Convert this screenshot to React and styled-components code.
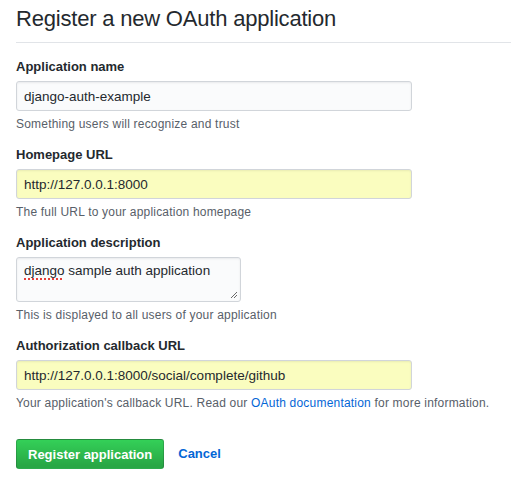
import React from 'react'
import styled, { createGlobalStyle } from 'styled-components'

const GlobalStyle = createGlobalStyle`
  body {
    margin: 0;
    background: #fff;
    color: #24292e;
    font-family: "Liberation Sans", Helvetica, Arial, sans-serif;
    font-size: 14px;
    line-height: 20px;
  }
`

const Page = styled.div`
  padding: 0 0 0 16px;
`

const Header = styled.div`
  padding-top: 4px;
  padding-bottom: 8px;
  border-bottom: 1px solid #e1e4e8;
  margin-bottom: 14px;
`

const Title = styled.h2`
  margin: 0;
  font-size: 22px;
  font-weight: 400;
  line-height: 30px;
  letter-spacing: -0.2px;
  color: #24292e;
`

const Form = styled.form`
  display: flex;
  flex-direction: column;
  gap: 12px;
`

const Group = styled.div`
  display: flex;
  flex-direction: column;
  align-items: flex-start;
`

const Label = styled.label`
  font-weight: 700;
  font-size: 13px;
  line-height: 20px;
  margin-bottom: 4px;
`

const Field = styled.input`
  box-sizing: border-box;
  width: 396px;
  height: 30px;
  padding: 0 7px;
  font-family: inherit;
  font-size: 13.5px;
  color: #24292e;
  background: ${(p) => (p.$autofill ? '#fafdbf' : '#fafbfc')};
  border: 1px solid #d1d5da;
  border-radius: 3px;
  box-shadow: inset 0 1px 2px rgba(27, 31, 35, 0.075);
  outline: none;
`

const TextBox = styled.div`
  position: relative;
  box-sizing: border-box;
  width: 225px;
  height: 45px;
  padding: 3px 7px;
  font-size: 13.5px;
  line-height: 20px;
  background: #fafbfc;
  border: 1px solid #d1d5da;
  border-radius: 3px;
  box-shadow: inset 0 1px 2px rgba(27, 31, 35, 0.075);
`

const Misspelled = styled.span`
  text-decoration: underline dotted #e5403a;
  text-decoration-thickness: 2px;
  text-underline-offset: 3px;
`

const Grip = styled.svg`
  position: absolute;
  right: 2px;
  bottom: 2px;
`

const Note = styled.p`
  margin: 4px 0 0;
  font-size: 12px;
  line-height: 18px;
  letter-spacing: 0.2px;
  color: #586069;
`

const Link = styled.a`
  color: #0366d6;
  text-decoration: none;
`

const Actions = styled.div`
  display: flex;
  align-items: center;
  gap: 14px;
  margin-top: 15px;
`

const Button = styled.button`
  box-sizing: border-box;
  height: 30px;
  padding: 0 11px;
  font-family: inherit;
  font-size: 13px;
  font-weight: 700;
  color: #fff;
  background-image: linear-gradient(-180deg, #34d058 0%, #28a745 90%);
  border: 1px solid rgba(27, 31, 35, 0.2);
  border-radius: 3px;
  cursor: pointer;
`

const CancelLink = styled(Link)`
  font-weight: 700;
  font-size: 13px;
`

export default function App() {
  return (
    <Page>
      <GlobalStyle />
      <Header>
        <Title>Register a new OAuth application</Title>
      </Header>
      <Form onSubmit={(e) => e.preventDefault()}>
        <Group>
          <Label>Application name</Label>
          <Field defaultValue='django-auth-example' />
          <Note>Something users will recognize and trust</Note>
        </Group>
        <Group>
          <Label>Homepage URL</Label>
          <Field $autofill defaultValue='http://127.0.0.1:8000' />
          <Note>The full URL to your application homepage</Note>
        </Group>
        <Group>
          <Label>Application description</Label>
          <TextBox>
            <Misspelled>django</Misspelled> sample auth application
            <Grip width='8' height='8' viewBox='0 0 8 8'>
              <path d='M7 1 L1 7 M7 4 L4 7' stroke='#6a6a6a' strokeWidth='1' />
            </Grip>
          </TextBox>
          <Note>This is displayed to all users of your application</Note>
        </Group>
        <Group>
          <Label>Authorization callback URL</Label>
          <Field
            $autofill
            defaultValue='http://127.0.0.1:8000/social/complete/github'
          />
          <Note>
            Your application's callback URL. Read our{' '}
            <Link href='#'>OAuth documentation</Link> for more information.
          </Note>
        </Group>
        <Actions>
          <Button type='submit'>Register application</Button>
          <CancelLink href='#'>Cancel</CancelLink>
        </Actions>
      </Form>
    </Page>
  )
}
